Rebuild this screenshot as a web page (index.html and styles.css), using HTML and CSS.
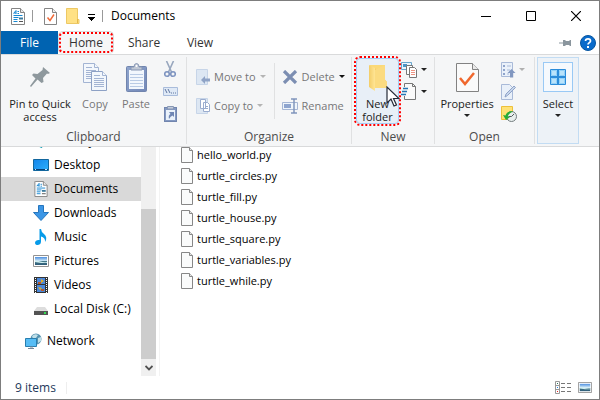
FILE: index.html
```html
<!DOCTYPE html>
<html lang="en">
<head>
<meta charset="utf-8">
<title>Documents</title>
<link rel="stylesheet" href="styles.css">
</head>
<body>
<svg class="defs" width="0" height="0" aria-hidden="true">
  <defs>
    <linearGradient id="gold" x1="0" x2="1"><stop offset="0" stop-color="#f3cd68"/><stop offset="1" stop-color="#ffe595"/></linearGradient>
    <linearGradient id="board" x1="0" y1="0" x2="1" y2="1"><stop offset="0" stop-color="#8fa5cd"/><stop offset="1" stop-color="#7288b8"/></linearGradient>
    <linearGradient id="sky" x1="0" y1="0" x2="0" y2="1"><stop offset="0" stop-color="#4c8ee0"/><stop offset=".5" stop-color="#d5ecf7"/><stop offset=".55" stop-color="#44798a"/><stop offset="1" stop-color="#2d5b78"/></linearGradient>
    <linearGradient id="screen" x1="0" y1="0" x2="1" y2="1"><stop offset="0" stop-color="#1384ea"/><stop offset="1" stop-color="#2eb0fc"/></linearGradient>
    <symbol id="doc" viewBox="0 0 14 17"><path d="M1 .5h8.5l4 4v12H.5V.5z" fill="#fff" stroke="#848484"/><path d="M9.5.5v4h4" fill="#e8e8e8" stroke="#848484"/><path d="M2.500 5.500L5 2.500V6M3 5h2M6.500 3.500H8M6.500 5.500H8M2.500 7.500h9M2.500 9.500h5M2.500 11.500h4M2.500 13.500h4" stroke="#1788d2" fill="none"/><path d="M8 9.500h4v2H8z" fill="#3c7b9d"/><path d="M8 13.500h4" stroke="#555"/></symbol>
    <symbol id="file" viewBox="0 0 13 16"><path d="M.5.500h8l3 3v12H.5z" fill="#fafbfb" stroke="#878787"/><path d="M8.500.500v3h3" fill="#e5e5e5" stroke="#878787"/></symbol>
    <symbol id="arrow" viewBox="0 0 6 4"><path d="M.5 0h5v1h-1v1h-1v1h-1V2h-1V1h-1z" fill="currentColor"/></symbol>
    <symbol id="picture" viewBox="0 0 16 12"><path d="M.5.500h15v11H.5z" fill="#fff" stroke="#929292"/><path d="M2 2h12v8H2z" fill="url(#sky)"/><path d="M2 6c4-1 7 2 12 1v1H8L2 7z" fill="#d0eef0"/></symbol>
  </defs>
</svg>
<div class="window">
  <header class="titlebar">
    <svg class="app-icon" width="14" height="17"><use href="#doc"/></svg>
    <span class="divider"></span>
    <button class="plain" aria-label="Properties"><svg width="13" height="17" viewBox="0 0 13 17"><path d="M.5.500h8l4 4v12H.5z" fill="#fff" stroke="#858585"/><path d="M8.500.500v4h4" fill="#eee" stroke="#858585"/><path d="M3.500 9.500l2.500 3 4-6" fill="none" stroke="#f06a38" stroke-width="1.500"/></svg></button>
    <button class="plain" aria-label="New folder"><svg width="14" height="16" viewBox="0 0 14 16"><path d="M.5.500h11v11h1.500v4H.5z" fill="#ffe185" stroke="#edc864"/><path d="M11.500 11v4" stroke="#e4b84c"/></svg></button>
    <button class="plain customize" aria-label="Customize toolbar"><svg width="7" height="7" viewBox="0 0 7 7"><path d="M0 0h7v1H0zM0 3h7v1H6v1H5v1H4v1H3V6H2V5H1V4H0z"/></svg></button>
    <span class="divider"></span>
    <h1>Documents</h1>
    <div class="captions">
      <button class="plain" aria-label="Minimize"><svg width="10" height="10" viewBox="0 0 10 10"><path d="M0 5.500h10" stroke="#000"/></svg></button>
      <button class="plain" aria-label="Maximize"><svg width="10" height="10" viewBox="0 0 10 10"><path d="M.5.500h9v9h-9z" fill="none" stroke="#000"/></svg></button>
      <button class="plain" aria-label="Close"><svg width="10" height="10" viewBox="0 0 10 10"><path d="M0 0l10 10M10 0L0 10" stroke="#000" stroke-width="1.200"/></svg></button>
    </div>
  </header>
  <nav class="tabs" aria-label="Ribbon tabs">
    <button class="tab file">File</button>
    <button class="tab active">Home</button>
    <button class="tab">Share</button>
    <button class="tab">View</button>
    <div class="tab-tools">
      <button class="plain" aria-label="Pin ribbon"><svg width="13" height="8" viewBox="0 0 13 8"><path d="M0 3.500h5v1H0z" fill="#8b969e"/><path d="M4 1h2l1 1h3l1-1h1v6h-1l-1-1H7L6 7H4z" fill="#8b969e"/></svg></button>
      <button class="plain" aria-label="Help"><svg width="16" height="16" viewBox="0 0 16 16"><circle cx="8" cy="8" r="7.500" fill="#0a6bcb" stroke="#07559f"/><path d="M5.500 6Q5.500 3.800 8 3.800T10.500 6C10.500 7.600 8 7.600 8 9.600" fill="none" stroke="#fff" stroke-width="1.700"/><path d="M7 11h2v2H7z" fill="#fff"/></svg></button>
    </div>
  </nav>
  <div class="ribbon">
    <section class="group clipboard">
      <div class="tools">
        <button class="large pin"><span class="picture"><svg width="22" height="22" viewBox="0 0 22 22"><path d="M14 1l7 6-2 1-1-.5-4 4.500.5 4-2 1-4-3.500L2 21l-1-1 5.500-7.500L3 9l1.500-1.500 4 .5L13.500 4z" fill="#8e989d"/></svg></span>Pin to Quick access</button>
        <button class="large copy" disabled><span class="picture"><svg width="25" height="28" viewBox="0 0 25 28"><g fill="#f3f7fc" stroke="#a3b4d3"><path d="M.5.500h11l4 4v15H.5z"/><path d="M11.500.500v4h4M3 4.500h6M3 7.500h10M3 9.500h10M3 11.500h10M3 13.500h10M3 15.500h10"/><path d="M8.500 8.500h11l4 4v15h-15z" stroke="#8da1c5"/><path d="M19.500 8.500v4h4M11 12.500h6M11 15.500h10M11 17.500h10M11 19.500h10M11 21.500h10M11 23.500h10"/></g></svg></span>Copy</button>
        <button class="large paste" disabled><span class="picture"><svg width="21" height="29" viewBox="0 0 21 29"><rect x=".5" y="3.500" width="20" height="25" rx="1" fill="url(#board)" stroke="#7185ae"/><path d="M3 7h15v19H3z" fill="#f2f7fd"/><path d="M4 11.500h13M4 14.500h13M4 17.500h13M4 20.500h13M4 23.500h13" stroke="#b9cbe5"/><path d="M5 7V4h3q0-3.500 2.500-3.500T13 4h3v3z" fill="#c0c8d5" stroke="#8797b4"/><circle cx="10.500" cy="3" r="1" fill="#fff"/></svg></span>Paste</button>
        <div class="stack">
          <button class="plain" disabled aria-label="Cut"><svg width="12" height="17" viewBox="0 0 12 17"><path d="M2.500 0l5 11M9.500 0l-5 11" stroke="#98a7be" stroke-width="1.600"/><circle cx="3" cy="13" r="2.300" fill="none" stroke="#7e94c0" stroke-width="1.600"/><circle cx="9" cy="13" r="2.300" fill="none" stroke="#7e94c0" stroke-width="1.600"/></svg></button>
          <button class="plain" disabled aria-label="Copy path"><svg width="15" height="9" viewBox="0 0 15 9"><path d="M.5.500h14v8H.5z" fill="#dfe9f6" stroke="#a9bcdb"/><path d="M2 2l2 4M5 2l2 4M8 6h1M10 6h1M12 6h1" stroke="#5f76a0"/></svg></button>
          <button class="plain" disabled aria-label="Paste shortcut"><svg width="13" height="17" viewBox="0 0 13 17"><rect x=".5" y="2.500" width="12" height="14" fill="#8499c2" stroke="#7185ae"/><path d="M2 5h9v10H2z" fill="#eaf2fb"/><path d="M3.500 4V1.500h6V4z" fill="#c3ccdb" stroke="#8797b4"/><path d="M5 7h5v5L8.500 10.500Q6.500 11 5 14q-1-4 1.500-5z" fill="#6f86b4"/></svg></button>
        </div>
      </div>
      <h2>Clipboard</h2>
    </section>
    <section class="group organize">
      <div class="tools">
        <div class="pair">
          <button class="small" disabled><svg width="14" height="16" viewBox="0 0 14 16"><path d="M.5.500h11v15H.5z" fill="#dde7f3" stroke="#c7d5e8"/><path d="M5 11l4-4v2.500h5v3H9V15z" fill="#8fa3c6"/></svg>Move to<svg class="arrow" width="6" height="4"><use href="#arrow"/></svg></button>
          <button class="small" disabled><svg width="14" height="16" viewBox="0 0 14 16"><path d="M.5.500h11v15H.5z" fill="#dde7f3" stroke="#c7d5e8"/><path d="M4.500 1.500h5v9h-5zM7.500 4.500h4l2 2v7h-6z" fill="#fff" stroke="#9aacce"/><path d="M9 8.500h3M9 10.500h3" stroke="#9aacce"/></svg>Copy to<svg class="arrow" width="6" height="4"><use href="#arrow"/></svg></button>
        </div>
        <div class="pair second">
          <button class="small" disabled><svg width="16" height="14" viewBox="0 0 16 14"><path d="M2 1l12 12M14 1L2 13" stroke="#7c8eb2" stroke-width="3.200"/></svg>Delete<svg class="arrow dark" width="6" height="4"><use href="#arrow"/></svg></button>
          <button class="small" disabled><svg width="16" height="16" viewBox="0 0 16 16"><path d="M.5 4.500h15v7H.5z" fill="#eff5fb" stroke="#a5b6d5"/><path d="M2 6h7v4H2z" fill="#8ea5cf"/><path d="M9 1h2.500L12 2l.5-1H15M12 2v12M9 15h2.500l.5-1 .5 1H15" fill="none" stroke="#8196bd" stroke-width="1.500"/></svg>Rename</button>
        </div>
      </div>
      <h2>Organize</h2>
    </section>
    <section class="group new">
      <div class="tools">
        <button class="large highlighted"><span class="picture"><svg width="20" height="28" viewBox="0 0 20 28"><path d="M2 1h15v16l2 1v6H2z" fill="#fbd978"/><path d="M1 1l6 3v23l-6-4z" fill="url(#gold)"/><path d="M7 4v20h12v-6" fill="#f6ce67"/><path d="M7 24V6l10-5v15l2 2v6z" fill="#fbdb80"/></svg></span>New folder
          <svg class="pointer" width="14" height="21" viewBox="0 0 14 21"><path d="M1 1v16l4-4 3 7 2.500-1-3-6.500H13z" fill="#fff" stroke="#252b38" stroke-width="1.200"/></svg>
        </button>
        <div class="stack with-arrows">
          <button class="plain" aria-label="New item"><svg width="17" height="17" viewBox="0 0 17 17"><path d="M.5 1.500h10v7H.5z" fill="#eaf5fd" stroke="#68a5cc"/><path d="M2 3h4v3H2z" fill="#4a95c8"/><path d="M5.500 4.500h6v9h-6z" fill="#fff" stroke="#777"/><path d="M8.500 6.500h5l2 2v8h-7z" fill="#fff" stroke="#777"/><path d="M10 9.500h4M10 11.500h4M10 13.500h4" stroke="#ee9484"/></svg><svg width="6" height="4"><use href="#arrow"/></svg></button>
          <button class="plain" aria-label="Easy access"><svg width="17" height="17" viewBox="0 0 17 17"><path d="M3.500.500h8l3 3v13h-11z" fill="#fafafa" stroke="#777"/><path d="M11.500.500v3h3" fill="none" stroke="#777"/><path d="M2 5.500h6M1 8.500h6M0 11.500h6" stroke="#f5f6f7" stroke-width="3"/><path d="M2 5.500h5M1 8.500h5M0 11.500h5" stroke="#2577b5" stroke-width="1.500"/></svg><svg width="6" height="4"><use href="#arrow"/></svg></button>
        </div>
      </div>
      <h2>New</h2>
    </section>
    <section class="group open">
      <div class="tools">
        <button class="large"><span class="picture"><svg width="23" height="29" viewBox="0 0 23 29"><path d="M.5.500h16l6 6v22H.5z" fill="#fafafa" stroke="#828282"/><path d="M16.500.500v6h6" fill="#e9e9e9" stroke="#828282"/><path d="M4 15l5 6 9-11" fill="none" stroke="#f0682e" stroke-width="2.500"/></svg></span>Properties<svg width="6" height="4"><use href="#arrow"/></svg></button>
        <div class="stack with-arrows">
          <button class="plain" disabled aria-label="Open"><svg width="15" height="16" viewBox="0 0 15 16"><path d="M.5.500h11v14H.5z" fill="#eaf1fa" stroke="#a9bad8"/><path d="M2 3h2v2H2zM2 7h2v2H2zM2 11h2v2H2z" fill="#8fa4cb"/><path d="M6 4h4M6 8h3M6 12h2" stroke="#a9bad8"/><path d="M10.500 7l4 4h-2.300v4.500H9V11H6.500z" fill="#8197c0"/></svg><svg class="arrow" width="6" height="4"><use href="#arrow"/></svg></button>
          <button class="plain" disabled aria-label="Edit"><svg width="15" height="16" viewBox="0 0 15 16"><path d="M.5.500h8l3 3v12H.5z" fill="#e9f0f9" stroke="#a9bad8"/><path d="M4 13l1-3 8-8 1.500 1.500-8 8z" fill="#c6d5eb" stroke="#8fa3c8"/></svg></button>
          <button class="plain" aria-label="History"><svg width="17" height="16" viewBox="0 0 17 16"><path d="M.5.500h11v13H.5z" fill="#ffe275" stroke="#edc03b"/><circle cx="10.500" cy="10.500" r="5" fill="#e9efee" stroke="#737c7e"/><path d="M10.500 10.500L13 8M7.500 10.500h3" stroke="#525a5c"/><path d="M12 5.500Q6 4.500 4.500 9.500L2 9l3 5 4-3-2.300-.7Q8 7 12 5.500z" fill="#29ad36"/></svg></button>
        </div>
      </div>
      <h2>Open</h2>
    </section>
    <button class="select-panel">
      <span class="select-icon"><svg width="16" height="16" viewBox="0 0 16 16"><path d="M.5.500h15v15H.5z" fill="#b9e3fb" stroke="#2b8cda"/><path d="M8 0v16M0 8h16" stroke="#2b8cda" stroke-width="2"/><path d="M1.500 1.500h5v5h-5zM9.500 1.500h5v5h-5zM1.500 9.500h5v5h-5zM9.500 9.500h5v5h-5z" fill="none" stroke="#91d0f8"/></svg></span>
      Select<svg width="6" height="4"><use href="#arrow"/></svg>
    </button>
  </div>
  <main class="content">
    <nav class="tree" aria-label="Folders">
      <ul>
        <li><a href="#"><svg width="16" height="16" viewBox="0 0 16 16"><path d="M8 1l6 3v7l-6 4-6-4V4z" fill="#34c0d4"/><path d="M8 7l6-3v7l-6 4z" fill="#168ba0"/></svg>3D Objects</a></li>
        <li><a href="#"><svg width="16" height="12" viewBox="0 0 16 12"><path d="M.5.500h15v11H.5z" fill="url(#screen)" stroke="#12669d"/><path d="M1 10.500h14" stroke="#083f77"/><path d="M2 10.500h1M12 10.500h2" stroke="#c0e8ff"/></svg>Desktop</a></li>
        <li class="current"><a href="#" aria-current="page"><svg width="14" height="16"><use href="#doc"/></svg>Documents</a></li>
        <li><a href="#"><svg width="16" height="16" viewBox="0 0 16 16"><path d="M5.500.500h5v7h5L8 15.500.500 7.500h5z" fill="#3b96e6" stroke="#2575bd"/></svg>Downloads</a></li>
        <li><a href="#"><svg width="16" height="16" viewBox="0 0 16 16"><path d="M6.500 0H8q.2 3 3 5 4 3.500 1 8 .5-4.500-4-5.500v5Q8 15.500 5 16q-3 0-3-2.300Q2.500 10.500 6.500 11z" fill="#079be9"/></svg>Music</a></li>
        <li><a href="#"><svg width="16" height="12"><use href="#picture"/></svg>Pictures</a></li>
        <li><a href="#"><svg width="14" height="16" viewBox="0 0 14 16"><path d="M0 0h14v16H0z" fill="#333"/><path d="M3 1h8v6H3zM3 8h8v7H3z" fill="#4b88da"/><path d="M1.500 1v15M12.500 1v15" stroke="#fff" stroke-dasharray="1 1"/><path d="M7 2l3 2-3 2zM4 10l4 1-2 2z" fill="#e6ad24"/><path d="M4 5h3v2H4zM7 12h3v2H7z" fill="#b75a2b"/></svg>Videos</a></li>
        <li><a href="#"><svg width="14" height="14" viewBox="0 0 14 14"><path d="M3 5h8l3 4H0z" fill="#ddd"/><path d="M0 9h14v4H0z" fill="#535353"/><path d="M10 10h2v2h-2z" fill="#35dc54"/></svg>Local Disk (C:)</a></li>
        <li class="root"><a href="#"><svg width="17" height="16" viewBox="0 0 17 16"><circle cx="11" cy="6" r="5.500" fill="#5692b0"/><path d="M7 3q3-3 6-1l-2 3-3 1zM13 5l3-1v4l-3 2z" fill="#bfdfe8"/><path d="M.5 5.500h11v8H.5z" fill="#57bdf5" stroke="#297eae"/><path d="M5 14h3M3 15.500h6" stroke="#789"/></svg>Network</a></li>
      </ul>
    </nav>
    <div class="scrollbar">
      <div class="thumb"></div>
      <button class="plain" aria-label="Scroll down"><svg width="8" height="6" viewBox="0 0 8 6"><path d="M.5 1L4 4.500 7.500 1" fill="none" stroke="#505050" stroke-width="1.800"/></svg></button>
    </div>
    <ul class="files">
      <li><svg width="13" height="16"><use href="#file"/></svg>hello_world.py</li>
      <li><svg width="13" height="16"><use href="#file"/></svg>turtle_circles.py</li>
      <li><svg width="13" height="16"><use href="#file"/></svg>turtle_fill.py</li>
      <li><svg width="13" height="16"><use href="#file"/></svg>turtle_house.py</li>
      <li><svg width="13" height="16"><use href="#file"/></svg>turtle_square.py</li>
      <li><svg width="13" height="16"><use href="#file"/></svg>turtle_variables.py</li>
      <li><svg width="13" height="16"><use href="#file"/></svg>turtle_while.py</li>
    </ul>
  </main>
  <footer class="statusbar">
    <span class="count">9 items</span>
    <div class="views">
      <button class="plain" aria-label="Details view"><svg width="16" height="13" viewBox="0 0 16 13"><path d="M.5.500h4v12h-4zM.5 4.500h4M.5 8.500h4" fill="#fff" stroke="#999"/><path d="M6 2.500h4M12 2.500h4M6 6.500h4M12 6.500h4M6 10.500h4M12 10.500h4" stroke="#777"/><path d="M2 2h1v1H2z" fill="#2c755b"/><path d="M2 6h1v1H2z" fill="#2484e8"/><path d="M2 10h1v1H2z" fill="#e22"/></svg></button>
      <button class="plain" aria-label="Large icons view"><svg width="14" height="11" viewBox="0 0 16 12" preserveAspectRatio="none"><use href="#picture"/></svg></button>
    </div>
  </footer>
</div>
</body>
</html>
```

FILE: styles.css
```css
* { box-sizing: border-box; }

body {
  margin: 0;
  background: #fff;
  color: #000;
  font: 12px/16px "Open Sans", "Noto Sans", sans-serif;
}

button { font: inherit; color: inherit; cursor: default; }
ul { list-style: none; margin: 0; padding: 0; }
h1, h2 { margin: 0; font: inherit; }
svg { display: block; flex: none; }
.defs { position: absolute; }

.plain {
  display: flex;
  align-items: center;
  justify-content: center;
  padding: 0;
  border: 0;
  background: none;
}

.window {
  display: flex;
  flex-direction: column;
  min-height: 100vh;
  border: 1px solid #7d7d7d;
}

/* Title bar */
.titlebar {
  display: flex;
  align-items: center;
  height: 30px;
  padding-left: 10px;
}
.divider { width: 1px; height: 12px; background: #999; }
.app-icon { margin-right: 7px; }
.titlebar .divider + .plain { margin-left: 11px; margin-right: 9px; }
.customize { margin: 2px 7px 0 8px; }
.titlebar h1 { margin-left: 8px; }
.captions {
  display: grid;
  grid-template-columns: repeat(3, 45px);
  align-self: stretch;
  margin-left: auto;
  margin-right: 1px;
}

/* Ribbon tabs */
.tabs { display: flex; height: 23px; }
.tab {
  width: 56px;
  padding: 0;
  border: 0;
  background: none;
  color: #333;
}
.tab.file { width: 57px; background: #0063b1; color: #fff; }
.tab.active {
  margin-right: 2px;
  background: #f5f6f7;
  border: 1px solid #dadbdc;
  border-bottom: 0;
  border-radius: 5px;
  outline: 2px dotted #f00;
  outline-offset: -3px;
}
.tab-tools { display: flex; gap: 8px; margin-left: auto; padding-right: 3px; }

/* Ribbon */
.ribbon {
  display: grid;
  grid-template-columns: 186px 165px 83px 100px 42px;
  height: 93px;
  padding: 2px 0;
  background: #f5f6f7;
  border: solid #d9dadb;
  border-width: 1px 0;
}
.group {
  display: flex;
  flex-direction: column;
  border-right: 1px solid #e0e1e2;
}
.tools { display: flex; flex: 1; font-size: 11px; }
.group h2 {
  text-align: center;
  line-height: 14px;
  color: #4c4c4c;
}
.large {
  display: flex;
  flex-direction: column;
  align-items: center;
  height: 70px;
  padding: 0;
  border: 0;
  background: none;
  line-height: 13px;
  color: #222;
}
.picture { display: flex; flex: none; align-items: center; height: 40px; }
.large > svg:last-child { margin-top: 4px; }
.large:disabled, .small:disabled { color: #777; }
.clipboard .tools { padding-left: 3px; }
.clipboard .pin { width: 72px; }
.clipboard .copy { width: 38px; }
.clipboard .paste { width: 44px; }
.stack {
  display: flex;
  flex-direction: column;
  gap: 5px;
  padding-top: 4px;
}
.stack .plain { width: 24px; height: 17px; color: #222; }
.with-arrows .plain { width: 28px; justify-content: flex-start; gap: 3px; }
.with-arrows .plain:disabled { color: #b0b0b0; }

.pair { display: flex; flex-direction: column; gap: 13px; padding: 12px 0 0 9px; }
.pair.second {
  height: 56px;
  margin: 6px 0 0 8px;
  padding: 6px 0 0 7px;
  border-left: 1px solid #e0e1e2;
}
.small {
  display: flex;
  align-items: center;
  gap: 4px;
  height: 16px;
  padding: 0;
  border: 0;
  background: none;
  white-space: nowrap;
}
.small .arrow { color: #b4b4b4; }
.small .arrow.dark { color: #111; }

.new .large {
  position: relative;
  width: 43px;
  height: 66px;
  margin: 1px 2px 0 4px;
  background: #e8eff7;
  border: 1px solid #a5cdf5;
  outline: 2px dotted #f00;
  border-radius: 4px;
}
.new .picture { height: 38px; }
.large > .pointer { position: absolute; left: 29px; top: 23px; }
.open .large { width: 64px; }
.open .stack { padding-left: 2px; }
.select-panel {
  display: flex;
  flex-direction: column;
  align-items: center;
  margin-left: 2px;
  width: 42px;
  padding: 4px 0 0;
  background: #edf2f7;
  border: 1px solid #c2dcf3;
  font-size: 11px;
  line-height: 13px;
  color: #222;
}
.select-icon {
  display: grid;
  place-items: center;
  width: 30px;
  height: 30px;
  margin-bottom: 5px;
  background: #f5f9fd;
  border: 1px solid #99c9f5;
}
.select-panel > svg { margin-top: 4px; }

/* Folder tree and file list */
.content {
  display: grid;
  grid-template-columns: 140px 15px 1fr;
  flex: 1;
  height: 229px;
  overflow: hidden;
}
.tree ul { margin-top: -18px; }
.tree a {
  display: flex;
  align-items: center;
  gap: 5px;
  height: 24px;
  padding-left: 32px;
  color: inherit;
  text-decoration: none;
  white-space: nowrap;
}
.tree svg { width: 16px; }
.tree .current { background: #d9d9d9; }
.tree .root { margin-top: 8px; }
.tree .root a { padding-left: 24px; }
.tree .root svg { width: 17px; }
.scrollbar { display: flex; flex-direction: column; background: #f0f0f0; }
.thumb { flex: 1; margin-top: 62px; background: #cdcdcd; }
.scrollbar .plain { height: 17px; }
.files {
  margin: -3px 0 0 3px;
  padding-left: 21px;
  border-left: 1px solid #f3f3f3;
  font-size: 11px;
}
.files li { display: flex; align-items: center; gap: 3px; height: 21px; }

/* Status bar */
.statusbar {
  display: flex;
  align-items: center;
  justify-content: space-between;
  height: 23px;
  padding: 0 7px 0 14px;
}
.count {
  padding-right: 10px;
  border-right: 1px solid #eee;
  line-height: 12px;
  color: #1e395b;
}
.views { display: flex; gap: 7px; }
```
